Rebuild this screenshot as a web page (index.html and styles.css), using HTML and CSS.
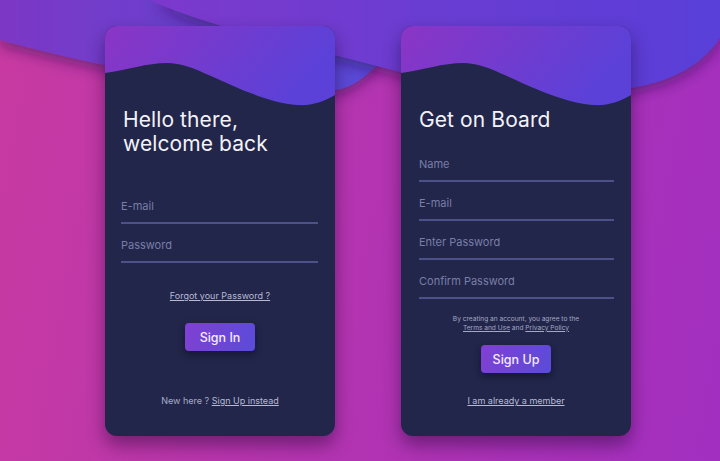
FILE: index.html
```html
<!DOCTYPE html>
<html lang="en">
<head>
<meta charset="utf-8">
<title>Login / Sign up</title>
<link rel="stylesheet" href="styles.css">
</head>
<body>
<main class="stage">
  <section class="card card-login">
    <svg class="wave" viewBox="0 0 230 80" width="230" height="80" aria-hidden="true">
      <defs>
        <linearGradient id="wg1" x1="0" y1="0" x2="1" y2="0.3">
          <stop offset="0" stop-color="#8b35c5"/>
          <stop offset="1" stop-color="#5b41d8"/>
        </linearGradient>
      </defs>
      <path fill="url(#wg1)" d="M0,0 H230 V69 C218,76 206,80 192,79 C165,77 132,62 106,50 C88,42 76,37 62,37 C42,37 22,44 0,47 Z"/>
    </svg>
    <h1 class="title">Hello there,<br>welcome back</h1>
    <form class="fields fields-login">
      <input class="field" type="email" placeholder="E-mail">
      <input class="field" type="password" placeholder="Password">
    </form>
    <a class="forgot" href="#">Forgot your Password ?</a>
    <button class="btn btn-login" type="button">Sign In</button>
    <p class="foot foot-login">New here ? <a href="#">Sign Up instead</a></p>
  </section>

  <section class="card card-signup">
    <svg class="wave" viewBox="0 0 230 80" width="230" height="80" aria-hidden="true">
      <defs>
        <linearGradient id="wg2" x1="0" y1="0" x2="1" y2="0.3">
          <stop offset="0" stop-color="#8b35c5"/>
          <stop offset="1" stop-color="#5b41d8"/>
        </linearGradient>
      </defs>
      <path fill="url(#wg2)" d="M0,0 H230 V69 C218,76 206,80 192,79 C165,77 132,62 106,50 C88,42 76,37 62,37 C42,37 22,44 0,47 Z"/>
    </svg>
    <h1 class="title">Get on Board</h1>
    <form class="fields fields-signup">
      <input class="field" type="text" placeholder="Name">
      <input class="field" type="email" placeholder="E-mail">
      <input class="field" type="password" placeholder="Enter Password">
      <input class="field" type="password" placeholder="Confirm Password">
    </form>
    <p class="terms">By creating an account, you agree to the<br><a href="#">Terms and Use</a> and <a href="#">Privacy Policy</a></p>
    <button class="btn btn-signup" type="button">Sign Up</button>
    <p class="foot foot-signup"><a href="#">I am already a member</a></p>
  </section>
</main>
</body>
</html>
```

FILE: styles.css
```css
html, body {
  margin: 0;
  padding: 0;
}

body {
  width: 720px;
  height: 461px;
  overflow: hidden;
  font-family: "Inter", "Open Sans", sans-serif;
  background-color: #b133b3;
  background-image:
    url("data:image/svg+xml,%3Csvg xmlns='http://www.w3.org/2000/svg' width='720' height='461'%3E%3Cdefs%3E%3ClinearGradient id='l' x1='0' x2='1' y1='0' y2='0'%3E%3Cstop offset='0' stop-color='%237c37c5'/%3E%3Cstop offset='1' stop-color='%23584ad9'/%3E%3C/linearGradient%3E%3ClinearGradient id='r' x1='0' x2='1' y1='0' y2='0'%3E%3Cstop offset='0' stop-color='%237c39cc'/%3E%3Cstop offset='1' stop-color='%23583fd8'/%3E%3C/linearGradient%3E%3Cfilter id='s' x='-20%25' y='-30%25' width='140%25' height='180%25'%3E%3CfeDropShadow dx='0' dy='5' stdDeviation='7' flood-color='%23300a55' flood-opacity='0.55'/%3E%3C/filter%3E%3C/defs%3E%3Cpath filter='url(%23s)' fill='url(%23l)' d='M0,0 V40 C80,62 230,96 335,90 C352,88 364,78 378,64 L378,0 Z'/%3E%3Cpath filter='url(%23s)' fill='url(%23r)' d='M150,0 C210,28 300,45 400,72 C480,93 560,100 631,88 C680,80 705,60 720,38 V0 Z'/%3E%3C/svg%3E"),
    linear-gradient(100deg, #c83aa1 0%, #b434b1 50%, #a22fc0 100%);
  background-repeat: no-repeat;
}

.stage {
  display: flex;
  gap: 66px;
  padding: 26px 0 0 105px;
}

.card {
  width: 230px;
  height: 410px;
  box-sizing: border-box;
  background: #21264a;
  border-radius: 12px;
  overflow: hidden;
  display: flex;
  flex-direction: column;
  align-items: stretch;
  box-shadow: 0 9px 18px rgba(25, 5, 45, 0.45);
}

.wave {
  display: block;
  flex: none;
}

.title {
  margin: 2px 17px 0 18px;
  font-size: 21px;
  line-height: 24px;
  font-weight: 400;
  color: #f3f2f8;
  letter-spacing: 0.1px;
}

.fields {
  display: flex;
  flex-direction: column;
  margin-right: 17px;
  margin-bottom: 0;
}

.fields-login {
  margin-left: 16px;
  margin-top: 29px;
}

.fields-signup {
  margin-left: 18px;
  margin-top: 11px;
}

.field {
  display: block;
  width: 100%;
  height: 39px;
  box-sizing: border-box;
  padding: 5px 0 0 0;
  margin: 0;
  border: none;
  border-bottom: 2px solid #4d5189;
  background: transparent;
  outline: none;
  font-family: inherit;
  font-size: 11px;
  color: #d0d2e6;
}

.field::placeholder {
  color: #7a7ea8;
  opacity: 1;
}

.forgot {
  align-self: center;
  margin-top: 27px;
  font-size: 9px;
  line-height: 12px;
  color: #b8bad4;
  text-decoration: underline;
}

.btn {
  align-self: center;
  width: 70px;
  height: 28px;
  border: none;
  border-radius: 4px;
  background: linear-gradient(110deg, #8040d2 0%, #5b4bd9 100%);
  color: #f4ecff;
  font-family: inherit;
  font-size: 12.5px;
  font-weight: 500;
  box-shadow: 0 3px 6px rgba(10, 5, 30, 0.5);
  padding: 0;
  cursor: pointer;
}

.btn-login {
  margin-top: 21px;
}

.terms {
  margin: 16px 0 0;
  text-align: center;
  font-size: 6.6px;
  line-height: 8.5px;
  color: #a5a8c4;
}

.terms a {
  color: #a5a8c4;
}

.btn-signup {
  margin-top: 13px;
}

.foot {
  margin: 0;
  text-align: center;
  font-size: 9px;
  line-height: 12px;
  color: #a9abc8;
}

.foot a {
  color: #b8bad4;
}

.foot-login {
  margin-top: 44px;
}

.foot-signup {
  margin-top: 22px;
}
```
